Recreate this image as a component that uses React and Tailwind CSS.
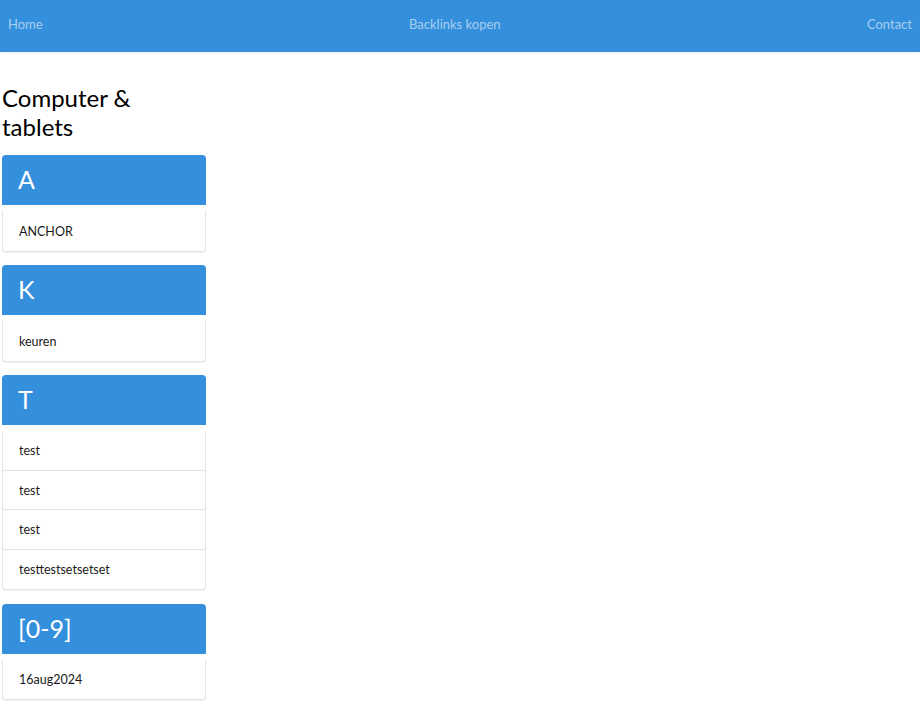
import React from 'react';

const groups = [
  { letter: 'A', items: ['ANCHOR'] },
  { letter: 'K', items: ['keuren'] },
  { letter: 'T', items: ['test', 'test', 'test', 'testtestsetsetset'] },
  { letter: '[0-9]', items: ['16aug2024'] },
];

function LetterCard({ letter, items }) {
  return (
    <div className="mb-[13.5px] w-[204px]">
      <div className="flex h-[50px] items-center rounded-t-[4px] bg-[#3490dc] px-4 text-[25px] text-white">
        {letter}
      </div>
      <ul className="mt-[6px] rounded-b-[4px] border border-t-0 border-[#e3e3e3] shadow-[0_1px_2px_rgba(0,0,0,0.06)]">
        {items.map((item, i) => (
          <li
            key={i}
            className="flex h-[39.5px] items-center border-b border-[#e3e3e3] px-4 pt-[3px] text-[12.5px] text-[#1a1a1a] last:border-b-0"
          >
            {item}
          </li>
        ))}
      </ul>
    </div>
  );
}

export default function App() {
  return (
    <div className="min-h-screen bg-white font-['Lato',sans-serif]">
      {/* Navbar */}
      <nav className="flex h-[52px] items-center justify-between bg-[#3490dc] px-2 pb-[2px] text-[13px] text-[#a8cdee] shadow-[0_1px_3px_rgba(0,0,0,0.08)]">
        <a href="#">Home</a>
        <a href="#">Backlinks kopen</a>
        <a href="#">Contact</a>
      </nav>

      <main className="px-[2px] pt-[31px]">
        <h1 className="mb-[14px] w-[204px] text-[24px] leading-[29px] text-black">
          Computer &amp; tablets
        </h1>
        {groups.map((g) => (
          <LetterCard key={g.letter} letter={g.letter} items={g.items} />
        ))}
      </main>
    </div>
  );
}
